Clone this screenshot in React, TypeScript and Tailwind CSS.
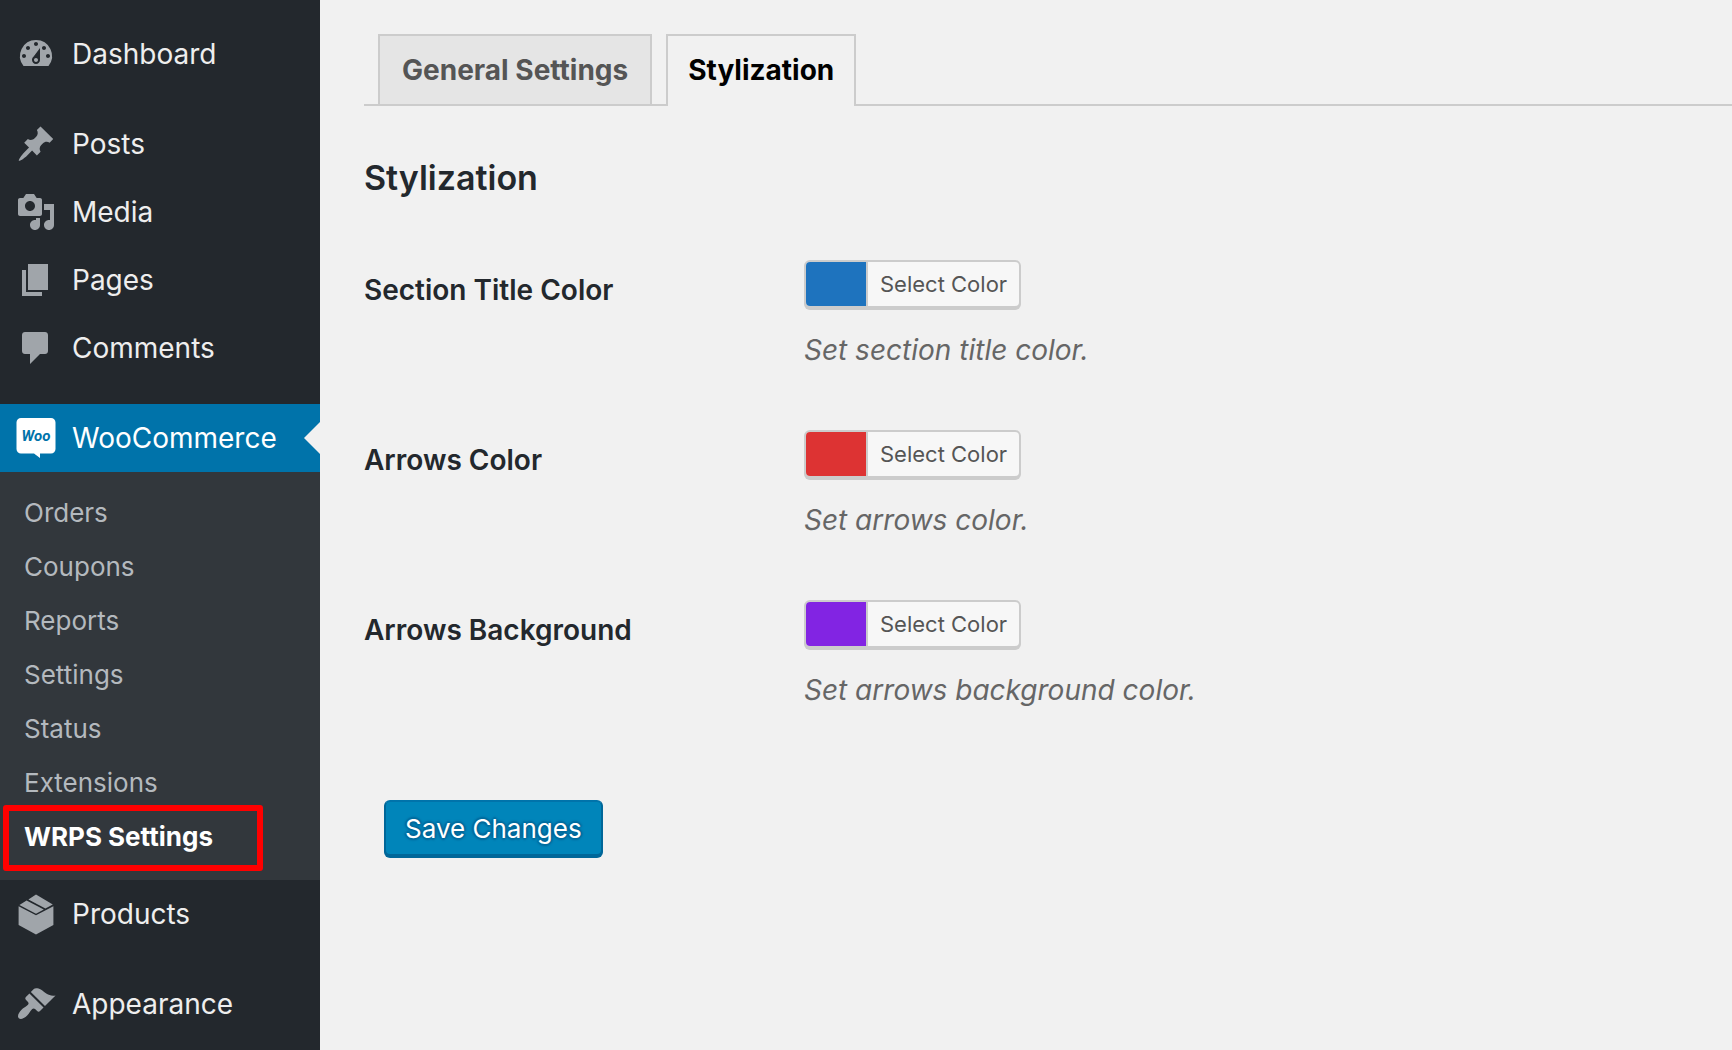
import type { ReactNode } from "react";

function Dashicon({ children }: { children: ReactNode }) {
  return (
    <svg viewBox="0 0 20 20" className="size-10 shrink-0 overflow-visible fill-[#a0a5aa]" aria-hidden="true">
      {children}
    </svg>
  );
}

const icons = {
  dashboard: (
    <Dashicon>
      <path d="M3.76 16h12.48A7.998 7.998 0 0 0 10 3a7.998 7.998 0 0 0-6.24 13zM10 4c.55 0 1 .45 1 1s-.45 1-1 1-1-.45-1-1 .45-1 1-1zM6 6c.55 0 1 .45 1 1s-.45 1-1 1-1-.45-1-1 .45-1 1-1zm8 0c.55 0 1 .45 1 1s-.45 1-1 1-1-.45-1-1 .45-1 1-1zm-5.37 5.55L12 7v6c0 1.1-.9 2-2 2s-2-.9-2-2c0-.57.24-1.08.63-1.45zM4 10c.55 0 1 .45 1 1s-.45 1-1 1-1-.45-1-1 .45-1 1-1zm12 0c.55 0 1 .45 1 1s-.45 1-1 1-1-.45-1-1 .45-1 1-1zm-5 3c0-.55-.45-1-1-1s-1 .45-1 1 .45 1 1 1 1-.45 1-1z" />
    </Dashicon>
  ),
  posts: (
    <Dashicon>
      <path d="M10.44 3.02l1.82-1.82 6.36 6.35-1.83 1.82c-1.05-.68-2.48-.57-3.41.36l-.75.75c-.92.93-1.04 2.35-.35 3.41l-1.83 1.82-2.41-2.41-2.8 2.79c-.42.42-3.38 2.71-3.8 2.29s1.86-3.39 2.28-3.81l2.79-2.79L4.1 9.36l1.83-1.82c1.05.69 2.48.57 3.4-.36l.75-.75c.93-.92 1.05-2.35.36-3.41z" />
    </Dashicon>
  ),
  media: (
    <Dashicon>
      <path d="M13 11V4c0-.55-.45-1-1-1h-1.67L9 1H5L3.67 3H2c-.55 0-1 .45-1 1v7c0 .55.45 1 1 1h10c.55 0 1-.45 1-1zM7 4.5c1.38 0 2.5 1.12 2.5 2.5S8.38 9.5 7 9.5 4.5 8.38 4.5 7 5.62 4.5 7 4.5zM14 6h5v10.5c0 1.38-1.12 2.5-2.5 2.5S14 17.88 14 16.5s1.12-2.5 2.5-2.5c.17 0 .34.02.5.05V9h-3V6zm-4 8.05V13h2v3.5c0 1.38-1.12 2.5-2.5 2.5S7 17.88 7 16.5 8.12 14 9.5 14c.17 0 .34.02.5.05z" />
    </Dashicon>
  ),
  pages: (
    <Dashicon>
      <path d="M6 15V2h10v13H6zm-1 1h8v2H3V5h2v11z" />
    </Dashicon>
  ),
  comments: (
    <Dashicon>
      <path d="M4.500 2h10c.85 0 1.500.650 1.500 1.500v8c0 .85-.65 1.500-1.500 1.500H12l-5 5v-5H4.500C3.650 13 3 12.350 3 11.500v-8C3 2.650 3.650 2 4.500 2z" />
    </Dashicon>
  ),
  products: (
    <Dashicon>
      <path d="M1.300 6.100 10 10.600l8.700-4.500v9.400L10 20.200l-8.700-4.700zM1.700 5.500 5.300 3.300l8.600 4.500L10 9.900zM6.200 2.700 10 .3l8.400 5-3.700 2z" />
    </Dashicon>
  ),
  appearance: (
    <Dashicon>
      <path d="M14.48 11.06L7.41 3.99l1.5-1.5c.5-.56 2.3-.47 3.51.32 1.21.8 1.43 1.28 2.91 2.1 1.18.64 2.45 1.26 4.45.85zm-.71.71L6.7 4.7 4.93 6.47c-.39.39-.39 1.02 0 1.41l1.06 1.06c.39.39.39 1.03 0 1.42-.6.6-1.43 1.11-2.21 1.69-.35.26-.7.53-1.01.84C1.43 14.23.4 16.08 1.4 17.07c.99 1 2.84-.03 4.18-1.36.31-.31.58-.66.85-1.02.57-.78 1.08-1.61 1.69-2.21.39-.39 1.02-.39 1.41 0l1.06 1.06c.39.39 1.02.39 1.41 0z" />
    </Dashicon>
  ),
  woo: (
    <svg viewBox="0 0 40 40" className="size-10 shrink-0" aria-hidden="true">
      <path
        fill="#fff"
        d="M5 0h30a4.500 4.500 0 0 1 4.500 4.500v26.500a4.500 4.500 0 0 1-4.500 4.500H24v4.500l-6-4.500H5A4.500 4.500 0 0 1 .5 31V4.500A4.500 4.500 0 0 1 5 0z"
      />
      <text
        x="20"
        y="23"
        textAnchor="middle"
        className="fill-[#0073aa] font-['Roboto',sans-serif] text-[15px] font-bold italic"
      >
        Woo
      </text>
    </svg>
  ),
};

function MenuItem({ icon, label }: { icon: ReactNode; label: string }) {
  return (
    <li>
      <a href="#" className="flex h-17 items-center gap-4 pl-4 text-[#eee]">
        {icon}
        {label}
      </a>
    </li>
  );
}

const submenu = ["Orders", "Coupons", "Reports", "Settings", "Status", "Extensions"];

function Sidebar() {
  return (
    <nav aria-label="Main menu" className="w-80 shrink-0 bg-[#23282d] pt-5 text-[28px] leading-9">
      <ul>
        <MenuItem icon={icons.dashboard} label="Dashboard" />
        <li className="h-[22px]" role="separator" />
        <MenuItem icon={icons.posts} label="Posts" />
        <MenuItem icon={icons.media} label="Media" />
        <MenuItem icon={icons.pages} label="Pages" />
        <MenuItem icon={icons.comments} label="Comments" />
        <li className="h-[22px]" role="separator" />
        <li>
          <a href="#" className="flex h-17 items-center gap-4 bg-[#0073aa] pl-4 text-white">
            {icons.woo}
            WooCommerce
            <span className="ml-auto border-y-16 border-r-16 border-y-transparent border-r-[#f1f1f1]" />
          </a>
          <ul className="bg-[#32373c] pt-[14px] pb-4 text-[26px] text-[#b4b9be]">
            {submenu.map((label) => (
              <li key={label}>
                <a href="#" className="flex h-[54px] items-center pl-6">
                  {label}
                </a>
              </li>
            ))}
            <li className="relative">
              <a href="#" aria-current="page" className="flex h-[54px] items-center pl-6 font-bold text-white">
                WRPS Settings
              </a>
              <span className="pointer-events-none absolute -top-[5px] -bottom-[7px] left-[3px] w-[260px] rounded-[3px] border-6 border-[#f00]" />
            </li>
          </ul>
        </li>
        <MenuItem icon={icons.products} label="Products" />
        <li className="h-[22px]" role="separator" />
        <MenuItem icon={icons.appearance} label="Appearance" />
      </ul>
    </nav>
  );
}

const fields = [
  { id: "title-color", label: "Section Title Color", hint: "Set section title color.", swatch: "bg-[#1e73be]" },
  { id: "arrows-color", label: "Arrows Color", hint: "Set arrows color.", swatch: "bg-[#dd3333]" },
  { id: "arrows-background", label: "Arrows Background", hint: "Set arrows background color.", swatch: "bg-[#8224e3]" },
];

export default function App() {
  return (
    <div className="flex min-h-screen bg-[#f1f1f1] font-['Inter',sans-serif] text-[#23282d]">
      <Sidebar />
      <main className="min-w-0 grow pt-[34px] pl-11 text-[28px] leading-9">
        <div role="tablist" className="flex gap-[14px] border-b-2 border-[#ccc] pl-[14px] font-bold leading-12">
          <button role="tab" aria-selected="false" className="border-2 border-b-0 border-[#ccc] bg-[#e5e5e5] px-[22px] py-[10px] text-[#555]">
            General Settings
          </button>
          <button role="tab" aria-selected="true" className="-mb-0.5 border-2 border-b-0 border-[#ccc] bg-[#f1f1f1] px-5 pt-[10px] pb-3 text-black">
            Stylization
          </button>
        </div>
        <form>
          <h2 className="mt-[52px] text-[34px] leading-10 font-semibold">Stylization</h2>
          <div className="mt-[62px]">
            {fields.map((field) => (
              <div key={field.id} className="flex h-[170px]">
                <label htmlFor={field.id} className="w-[440px] shrink-0 pt-3 font-semibold">
                  {field.label}
                </label>
                <div>
                  <button
                    id={field.id}
                    type="button"
                    className="flex h-12 overflow-hidden rounded-md border-2 border-[#ccc] bg-[#f7f7f7] text-[22px] leading-11 text-[#555] shadow-[0_2px_0_#ccc]"
                  >
                    <span className={`w-15 ${field.swatch}`} />
                    <span className="border-l-2 border-[#ccc] px-3">Select Color</span>
                  </button>
                  <p className="mt-6 text-[#666] italic">{field.hint}</p>
                </div>
              </div>
            ))}
          </div>
          <button
            type="submit"
            className="mt-[30px] ml-5 h-14 rounded-md border-2 border-[#006799] border-t-[#0073aa] bg-[#0085ba] px-[19px] pt-0.5 text-[26px] text-white shadow-[0_2px_0_#006799] [text-shadow:0_-2px_2px_#006799,2px_0_2px_#006799,0_2px_2px_#006799,-2px_0_2px_#006799]"
          >
            Save Changes
          </button>
        </form>
      </main>
    </div>
  );
}
